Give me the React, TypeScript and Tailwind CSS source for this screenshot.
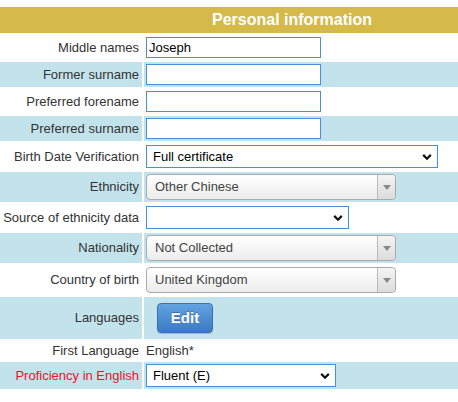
import React from "react";

const font = { fontFamily: '"Liberation Sans", Arial, sans-serif' };

const Chevron: React.FC = () => (
  <svg width="10" height="7" viewBox="0 0 10 7" className="absolute right-[5px] top-1/2 -translate-y-1/2">
    <path d="M1.2 1.4 L5 5.2 L8.8 1.4" fill="none" stroke="#111" strokeWidth="2.2" />
  </svg>
);

const NativeSelect: React.FC<{ value: string; width: string }> = ({ value, width }) => (
  <div className={`relative h-[23px] ${width} border border-[#4a8fd6] bg-white flex items-center pl-[6px] text-[13px] text-black`}>
    <span>{value}</span>
    <Chevron />
  </div>
);

const ChosenSelect: React.FC<{ value: string }> = ({ value }) => (
  <div className="relative h-[26px] w-[250px] rounded-[4px] border border-[#aaa] bg-gradient-to-b from-white to-[#ececec] flex items-center pl-[8px] text-[13px] text-[#444]">
    <span>{value}</span>
    <div className="absolute right-0 top-0 bottom-0 w-[18px] border-l border-[#bbb] rounded-r-[4px] bg-gradient-to-b from-[#f4f4f4] to-[#dcdcdc] flex items-center justify-center">
      <div className="w-0 h-0 border-l-[4px] border-r-[4px] border-t-[5px] border-l-transparent border-r-transparent border-t-[#888]" />
    </div>
  </div>
);

const TextInput: React.FC<{ value?: string }> = ({ value }) => (
  <div className="h-[21px] w-[175px] border border-[#4a8fd6] bg-white flex items-center pl-[2px] text-[13px] text-black">
    {value}
  </div>
);

type Row = { label: string; shade: boolean; h: string; red?: boolean; content: React.ReactNode };

const rows: Row[] = [
  { label: "Middle names", shade: false, h: "h-[25px]", content: <TextInput value="Joseph" /> },
  { label: "Former surname", shade: true, h: "h-[25px]", content: <TextInput /> },
  { label: "Preferred forename", shade: false, h: "h-[25px]", content: <TextInput /> },
  { label: "Preferred surname", shade: true, h: "h-[25px]", content: <TextInput /> },
  { label: "Birth Date Verification", shade: false, h: "h-[27px]", content: <NativeSelect value="Full certificate" width="w-[292px]" /> },
  { label: "Ethnicity", shade: true, h: "h-[30px]", content: <ChosenSelect value="Other Chinese" /> },
  { label: "Source of ethnicity data", shade: false, h: "h-[27px]", content: <NativeSelect value="" width="w-[203px]" /> },
  { label: "Nationality", shade: true, h: "h-[30px]", content: <ChosenSelect value="Not Collected" /> },
  { label: "Country of birth", shade: false, h: "h-[30px]", content: <ChosenSelect value="United Kingdom" /> },
  {
    label: "Languages",
    shade: true,
    h: "h-[42px]",
    content: (
      <button className="ml-[11px] h-[30px] w-[56px] rounded-[4px] border border-[#3b71b0] bg-gradient-to-b from-[#62a3e2] to-[#3c79c2] text-white font-bold text-[15px] [text-shadow:0_-1px_0_rgba(0,0,0,0.25)] shadow-[0_1px_1px_rgba(0,0,0,0.2)]">
        Edit
      </button>
    ),
  },
  { label: "First Language", shade: false, h: "h-[19px]", content: <span className="text-[13px] text-[#333]">English*</span> },
  { label: "Proficiency in English", shade: true, h: "h-[27px]", red: true, content: <NativeSelect value="Fluent (E)" width="w-[190px]" /> },
];

const App: React.FC = () => (
  <div className="w-[458px] h-[402px] bg-white overflow-hidden pt-[7px]" style={font}>
    <div className="flex flex-col gap-[2px]">
      <div className="h-[26px] bg-[#d5b949] flex items-center pl-[212px] text-white font-bold text-[16px]">
        Personal information
      </div>
      {rows.map((r) => (
        <div key={r.label} className={`flex gap-[2px] ${r.h}`}>
          <div
            className={`w-[142px] shrink-0 flex items-center justify-end pr-[3px] text-[13px] whitespace-nowrap ${
              r.shade ? "bg-[#c3e3ec]" : ""
            } ${r.red ? "text-[#f0102a]" : "text-[#333]"}`}
          >
            {r.label}
          </div>
          <div className={`flex-1 flex items-center pl-[2px] ${r.shade ? "bg-[#c3e3ec]" : ""}`}>{r.content}</div>
        </div>
      ))}
    </div>
  </div>
);

export default App;
